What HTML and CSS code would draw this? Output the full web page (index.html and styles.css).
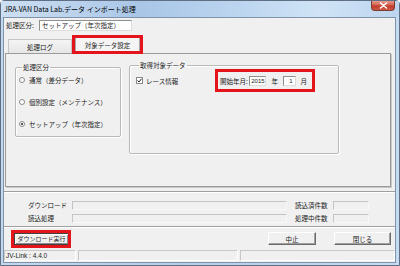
FILE: index.html
```html
<!DOCTYPE html>
<html lang="ja">
<head>
<meta charset="utf-8">
<title>JRA-VAN Data Lab.データ インポート処理</title>
<link rel="stylesheet" href="styles.css">
</head>
<body>
<div class="window">
  <div class="titlebar">
    <span class="title">JRA-VAN Data Lab.データ インポート処理</span>
    <span class="close"><svg width="9" height="7" viewBox="0 0 9 7"><path d="M1.5 1 L7.5 6 M7.5 1 L1.5 6" stroke="#fff" stroke-width="1.6" stroke-linecap="round"/></svg></span>
  </div>
  <div class="client">
    <div class="kubun-row">
      <span class="kubun-label">処理区分:</span>
      <span class="textbox kubun-box">セットアップ（年次指定）</span>
    </div>
    <div class="tabs">
      <span class="tab">処理ログ</span>
      <span class="tab sel">対象データ設定</span>
    </div>
    <div class="panel">
      <fieldset class="group g1">
        <legend>処理区分</legend>
        <div class="radio"><span class="rb"></span>通常（差分データ）</div>
        <div class="radio"><span class="rb"></span>個別設定（メンテナンス）</div>
        <div class="radio"><span class="rb on"></span>セットアップ（年次指定）</div>
      </fieldset>
      <fieldset class="group g2">
        <legend>取得対象データ</legend>
        <div class="g2-row">
          <div class="check"><span class="cb"><svg width="5" height="5" viewBox="0 0 5 5"><path d="M0.5 2.5 L2 4 L4.5 0.8" fill="none" stroke="#222" stroke-width="1"/></svg></span>レース情報</div>
          <div class="date">
            <span class="date-label">開始年月:</span>
            <span class="textbox year">2015</span>
            <span class="unit">年</span>
            <span class="textbox month">1</span>
            <span class="unit">月</span>
          </div>
        </div>
      </fieldset>
    </div>
    <div class="etched first"></div>
    <div class="progress">
      <span class="plabel">ダウンロード</span>
      <span class="pbox"></span>
      <span class="plabel right">読込済件数</span>
      <span class="pbox"></span>
      <span class="plabel">読込処理</span>
      <span class="pbox"></span>
      <span class="plabel right">処理中件数</span>
      <span class="pbox"></span>
    </div>
    <div class="etched"></div>
    <div class="buttons">
      <span class="btn default">ダウンロード実行</span>
      <span class="btn stop">中止</span>
      <span class="btn closebtn">閉じる</span>
    </div>
    <div class="statusbar">
      <span class="spanel p1">JV-Link : 4.4.0</span>
      <span class="spanel p2"></span>
      <span class="spanel p3"></span>
    </div>
  </div>
</div>
</body>
</html>
```
FILE: styles.css
```css
html, body {
  margin: 0;
  padding: 0;
  width: 400px;
  height: 266px;
  overflow: hidden;
  background: #fff;
}
body {
  font-family: "Noto Sans CJK JP", "Noto Sans", sans-serif;
  font-size: 6.5px;
  color: #1a1a1a;
}
.window {
  width: 400px;
  height: 266px;
  box-sizing: border-box;
  border: 1px solid #5f6f84;
  border-radius: 4px 4px 0 0;
  background: linear-gradient(90deg, #c3d8ee 0%, #b4cde9 45%, #c5dbf2 100%);
  display: flex;
  flex-direction: column;
}
.titlebar {
  height: 16px;
  display: flex;
  align-items: flex-start;
  flex-shrink: 0;
  background: linear-gradient(90deg, #cddff2 0%, #a9c6e7 35%, #bcd5ef 60%, #d0e3f6 80%, #bdd5ef 100%);
}
.title {
  margin: 3px 0 0 3px;
  line-height: 10px;
  font-size: 7px;
  color: #000;
  white-space: nowrap;
}
.close {
  margin-left: auto;
  margin-right: 4px;
  width: 24px;
  height: 10px;
  box-sizing: border-box;
  border: 1px solid #7d3a31;
  border-top: none;
  border-radius: 0 0 4px 4px;
  background: linear-gradient(#e59a8c 0%, #d3624f 45%, #c0392a 55%, #cf5a45 100%);
  display: flex;
  align-items: center;
  justify-content: center;
}
.close svg { display: block; }
.client {
  flex: 1;
  margin: 0 3px 2px 2px;
  background: #f0f0f0;
  border: 1px solid #7f93ad;
  display: flex;
  flex-direction: column;
  min-height: 0;
}
.kubun-row {
  display: flex;
  align-items: center;
  margin-top: 2px;
  padding-left: 2px;
  height: 11px;
}
.kubun-label {
  width: 33px;
  line-height: 11px;
  white-space: nowrap;
}
.textbox {
  box-sizing: border-box;
  background: #fff;
  border: 1px solid;
  border-color: #8e8f8f #dcdcdc #dcdcdc #8e8f8f;
  line-height: 9px;
  white-space: nowrap;
}
.kubun-box {
  width: 93px;
  height: 11px;
  padding-left: 2px;
  font-size: 6.5px;
}
.tabs {
  display: flex;
  align-items: flex-end;
  height: 18px;
  margin-top: 4px;
  padding-left: 4px;
}
.tab {
  box-sizing: border-box;
  width: 64px;
  height: 14px;
  border: 1px solid #c6c6c6;
  border-bottom: none;
  background: linear-gradient(#f4f4f4, #e6e6e6);
  display: flex;
  align-items: center;
  justify-content: center;
  line-height: 10px;
}
.tab.sel {
  position: relative;
  width: 65px;
  height: 16px;
  margin-left: 3px;
  background: #f4f4f4;
  border-color: #a8a8a8;
  padding-bottom: 2px;
}
.tab.sel::after {
  content: "";
  position: absolute;
  left: -4px;
  right: -4px;
  top: -3px;
  bottom: -1px;
  border: 3px solid #e3141c;
}
.panel {
  box-sizing: border-box;
  margin-left: 1px;
  width: 386px;
  height: 134px;
  border: 1px solid #9b9b9b;
  box-shadow: 1px 1px 0 #c8c8c8;
  background: #f0f0f0;
  display: flex;
  align-items: flex-start;
}
.group {
  box-sizing: border-box;
  margin: 0;
  padding: 0;
  border: 1px solid #b9b9b9;
  box-shadow: inset 1px 1px 0 #fff, 1px 1px 0 #fff;
  border-radius: 2px;
}
.group legend {
  margin-left: 3px;
  padding: 0 1px;
  line-height: 8px;
  font-size: 6.5px;
}
.g1 {
  margin: 9px 0 0 9px;
  width: 106px;
  height: 74px;
  padding: 4px 0 0 3px;
}
.radio {
  display: flex;
  align-items: center;
  height: 10px;
  line-height: 10px;
  margin-bottom: 12px;
  white-space: nowrap;
}
.rb {
  box-sizing: border-box;
  width: 6px;
  height: 6px;
  border-radius: 50%;
  border: 1px solid #8a8a8a;
  background: #fff;
  margin-right: 4px;
  position: relative;
}
.rb.on::after {
  content: "";
  position: absolute;
  left: 1px;
  top: 1px;
  width: 2px;
  height: 2px;
  border-radius: 50%;
  background: #222;
}
.g2 {
  margin: 7px 0 0 8px;
  width: 210px;
  height: 93px;
  padding: 3px 0 0 6px;
}
.g2-row {
  display: flex;
  align-items: center;
}
.check {
  width: 82px;
  display: flex;
  align-items: center;
  white-space: nowrap;
}
.cb {
  box-sizing: border-box;
  width: 7px;
  height: 7px;
  border: 1px solid #8a8a8a;
  background: #fff;
  margin-right: 3px;
  display: flex;
  align-items: center;
  justify-content: center;
}
.cb svg { display: block; }
.date {
  position: relative;
  height: 17px;
  width: 94px;
  display: flex;
  align-items: center;
  padding-left: 2px;
  box-sizing: border-box;
  white-space: nowrap;
}
.date::after {
  content: "";
  position: absolute;
  left: -3px;
  right: -3px;
  top: -3px;
  bottom: -3px;
  border: 3px solid #e3141c;
}
.date-label { width: 31px; }
.year {
  width: 18px;
  height: 10px;
  text-align: center;
  font-family: "Liberation Sans", sans-serif;
  font-size: 6px;
}
.month {
  width: 13px;
  height: 10px;
  text-align: right;
  padding-right: 2px;
  font-family: "Liberation Sans", sans-serif;
  font-size: 6px;
}
.unit {
  margin: 0 5px;
}
.etched {
  height: 0;
  border-top: 1px solid #a0a0a0;
  border-bottom: 1px solid #fff;
  margin-top: 1px;
}
.etched.first {
  margin-top: 4px;
}
.progress {
  display: grid;
  grid-template-columns: 44px 215px 46px 36px;
  grid-auto-rows: 13px;
  align-items: center;
  margin-top: 6px;
  padding-left: 24px;
}
.plabel {
  line-height: 9px;
  white-space: nowrap;
}
.plabel.right {
  padding-left: 8px;
}
.pbox {
  box-sizing: border-box;
  height: 9px;
  border: 1px solid;
  border-color: #c4c4c4 #f8f8f8 #f8f8f8 #c4c4c4;
  background: #f0f0f0;
}
.buttons {
  display: flex;
  align-items: center;
  margin-top: 4px;
  height: 13px;
  padding-left: 10px;
}
.btn {
  box-sizing: border-box;
  height: 13px;
  display: flex;
  align-items: center;
  justify-content: center;
  background: #f0f0f0;
  border: 1px solid;
  border-color: #fff #6b6b6b #6b6b6b #fff;
  box-shadow: inset -1px -1px 0 #a0a0a0;
  line-height: 10px;
  white-space: nowrap;
}
.btn.default {
  position: relative;
  width: 55px;
  height: 12px;
  border: 1px solid #404040;
  box-shadow: inset 1px 1px 0 #fff, inset -1px -1px 0 #8a8a8a;
  font-size: 6px;
}
.btn.default::after {
  content: "";
  position: absolute;
  left: -4px;
  right: -3px;
  top: -4px;
  bottom: -4px;
  border: 3px solid #e3141c;
}
.btn.stop {
  width: 48px;
  margin-left: auto;
}
.btn.closebtn {
  width: 57px;
  margin-left: 18px;
  margin-right: 4px;
}
.statusbar {
  display: flex;
  margin-top: 5px;
  height: 11px;
  gap: 2px;
}
.spanel {
  box-sizing: border-box;
  height: 11px;
  border: 1px solid;
  border-color: #c8c8c8 #fff #fff #c8c8c8;
  line-height: 9px;
  white-space: nowrap;
  font-family: "Liberation Sans", sans-serif;
  font-size: 6.5px;
  padding-left: 1px;
}
.p1 { width: 72px; }
.p2 { width: 160px; }
.p3 { flex: 1; }
```
